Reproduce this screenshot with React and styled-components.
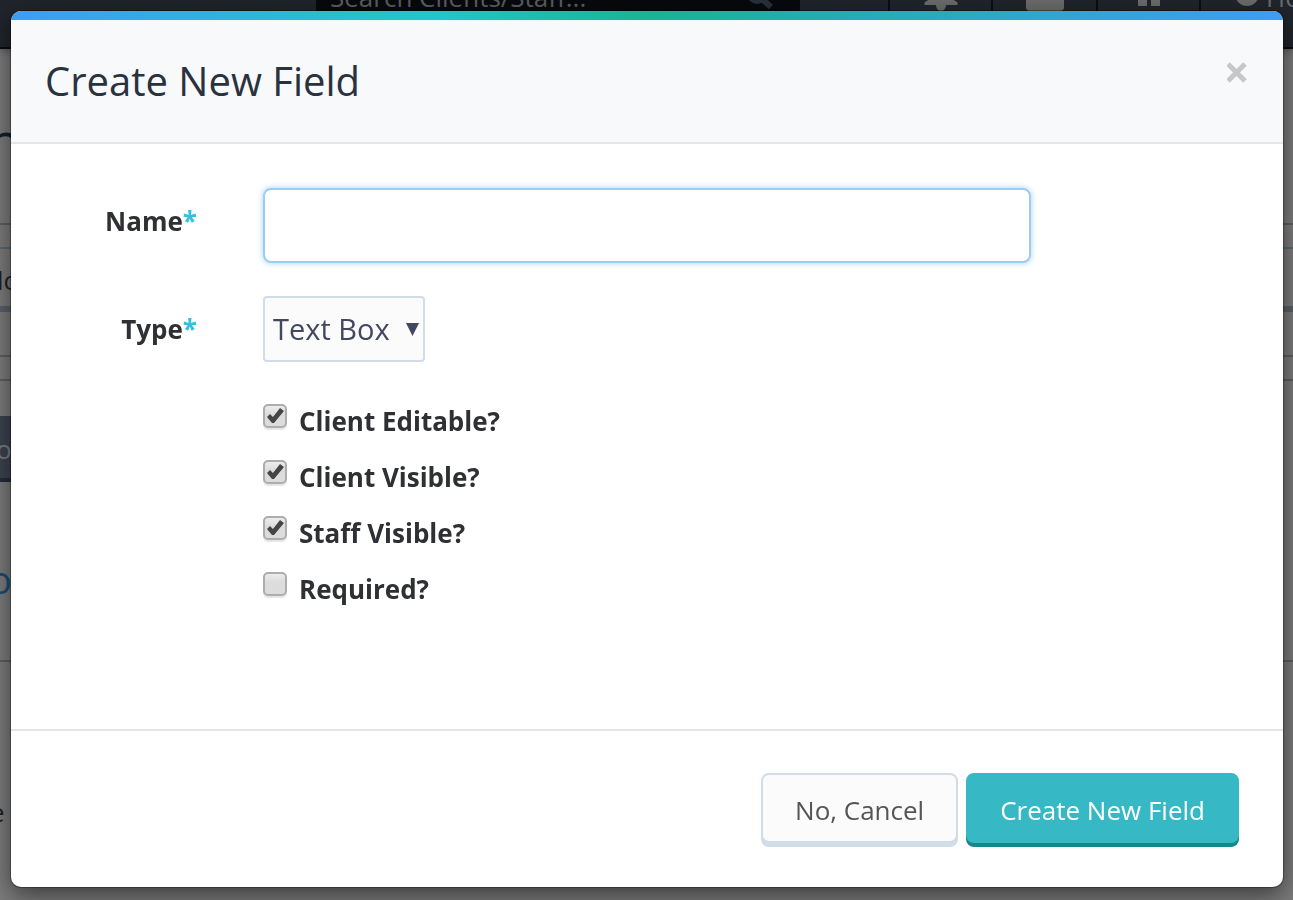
import React, { useState } from "react";
import styled, { createGlobalStyle } from "styled-components";

const GlobalStyle = createGlobalStyle`
  * {
    box-sizing: border-box;
  }
  body {
    margin: 0;
    background: #7c7c7c;
    color: #333;
    font-family: "Open Sans", "Noto Sans", sans-serif;
  }
`;

const Screen = styled.div`
  height: 100vh;
  overflow: hidden;
`;

/* page behind the dialog */
const NavBar = styled.nav`
  display: grid;
  grid-template-columns:
    minmax(0, 316fr) minmax(0, 484fr) minmax(0, 90fr) minmax(0, 103fr)
    minmax(0, 105fr) minmax(0, 103fr) minmax(0, 92fr);
  align-items: end;
  align-content: end;
  height: 49px;
  overflow: hidden;
  background: #20242c;
  border-bottom: 2px solid #0b0c0e;
  box-shadow: 0 2px 8px rgba(0, 0, 0, 0.3);
`;

const SearchBox = styled.div`
  height: 100px;
  display: flex;
  align-items: center;
  justify-content: space-between;
  padding: 0 26px 0 14px;
  background: #08090c;
  color: #5b5e62;
  font-size: 26px;
`;

const NavItem = styled.div`
  height: 100px;
  display: flex;
  align-items: center;
  justify-content: ${({ $start }) => ($start ? "flex-start" : "center")};
  gap: 6px;
  padding-left: ${({ $start }) => ($start ? 33 : 0)}px;
  border-right: ${({ $start }) => ($start ? "0" : "2px solid #0b0c0e")};
  color: #6b6b6b;
  font-size: 26px;
  white-space: nowrap;

  svg {
    flex-shrink: 0;
  }
`;

const Backdrop = styled.main`
  display: flex;
  flex-direction: column;
`;

const Strip = styled.div`
  height: ${({ $height }) => $height}px;
  overflow: hidden;
  border-bottom: ${({ $line, $thick }) =>
    $line ? `${$thick || 2}px solid ${$line}` : "0"};
  color: ${({ $color }) => $color || "#222"};
  font-size: ${({ $size }) => $size || 26}px;
  line-height: ${({ $lead, $height }) => $lead || $height}px;
  text-indent: ${({ $indent }) => $indent || 0}px;
`;

const PageButton = styled.div`
  width: 120px;
  height: 66px;
  background: #3c4452;
  border-bottom: 4px solid #252c36;
  color: #7f7f7f;
  font-size: 26px;
  line-height: 66px;
  text-indent: -4px;
`;

/* dialog */
const Overlay = styled.div`
  position: fixed;
  inset: 0;
  padding: 11px 10px 13px 11px;
`;

const Dialog = styled.section`
  height: 100%;
  display: flex;
  flex-direction: column;
  overflow: hidden;
  background: #fff;
  border-radius: 10px;
  box-shadow: 0 0 0 1px rgba(0, 0, 0, 0.3), 0 8px 26px rgba(0, 0, 0, 0.55);
`;

const TopStripe = styled.div`
  flex-shrink: 0;
  height: 9px;
  background: linear-gradient(
    to right,
    #3d9df6 0%,
    #24c6c8 33%,
    #1ab394 50%,
    #3d9df6 100%
  );
`;

const Header = styled.header`
  display: flex;
  justify-content: space-between;
  align-items: flex-start;
  padding: 34px;
  background: #f8f9fb;
  border-bottom: 2px solid #e4e5e7;
`;

const Title = styled.h1`
  margin: 0;
  color: #2a323e;
  font-size: 40px;
  font-weight: 400;
  line-height: 54px;
`;

const CloseButton = styled.button`
  display: flex;
  margin: 8px 2px 0 0;
  padding: 0;
  border: 0;
  background: none;
  color: #c6c7c9;
  cursor: pointer;
`;

const Form = styled.form`
  flex: 1;
  display: flex;
  flex-direction: column;
`;

const Fields = styled.div`
  flex: 1;
  display: grid;
  grid-template-columns: 186px minmax(0, 768px);
  align-content: start;
  column-gap: 66px;
  row-gap: 33px;
  padding: 44px 0;
`;

const FieldLabel = styled.label`
  padding-top: 15px;
  color: #2f3033;
  font-size: 26px;
  font-weight: 700;
  line-height: 36px;
  text-align: right;
`;

const Star = styled.span`
  color: #2fc1dd;
`;

const NameInput = styled.input`
  width: 100%;
  height: 75px;
  padding: 0 16px;
  border: 2px solid #9fcdf2;
  border-radius: 8px;
  outline: 0;
  box-shadow: 0 0 6px #9fd2fa;
  color: #333;
  font: inherit;
  font-size: 28px;
`;

const SelectWrap = styled.div`
  display: grid;
  justify-self: start;
  align-items: center;
  width: 162px;

  select,
  svg {
    grid-area: 1 / 1;
  }
  svg {
    justify-self: end;
    margin-right: 6px;
    pointer-events: none;
  }
`;

const Select = styled.select`
  appearance: none;
  width: 100%;
  height: 66px;
  padding: 0 8px 2px;
  border: 2px solid #d0dce8;
  border-radius: 4px;
  background: #fbfbfc;
  color: #434860;
  font: inherit;
  font-size: 29px;
`;

const CheckList = styled.div`
  grid-column: 2;
  display: flex;
  flex-direction: column;
  gap: 20px;
  padding-top: 8px;
`;

const CheckRow = styled.label`
  display: flex;
  gap: 12px;
  color: #2f3033;
  font-size: 26px;
  font-weight: 700;
  line-height: 36px;
`;

const CheckWrap = styled.span`
  display: grid;
  place-items: center;
  width: 24px;
  height: 24px;
  margin-top: 1px;

  input,
  svg {
    grid-area: 1 / 1;
  }
  svg {
    pointer-events: none;
  }
`;

const CheckInput = styled.input`
  appearance: none;
  width: 24px;
  height: 24px;
  margin: 0;
  border: 2px solid #adadad;
  border-radius: 5px;
  background: linear-gradient(#ececec, #dcdcdc 40%);
  box-shadow: 0 2px 1px rgba(0, 0, 0, 0.1);
`;

const Footer = styled.footer`
  display: flex;
  justify-content: flex-end;
  gap: 8px;
  padding: 42px 44px 44px;
  border-top: 2px solid #e4e5e7;
`;

const Button = styled.button`
  height: 70px;
  padding: 3px 32px 0;
  border: 2px solid ${({ $primary }) => ($primary ? "#36b9c4" : "#d0dce8")};
  border-radius: 8px;
  background: ${({ $primary }) => ($primary ? "#36b9c4" : "#fbfbfc")};
  box-shadow: 0 4px 0 ${({ $primary }) => ($primary ? "#19868d" : "#d0dce8")};
  color: ${({ $primary }) => ($primary ? "#fff" : "#555")};
  font: inherit;
  font-size: 26px;
  cursor: pointer;
`;

const SearchIcon = () => (
  <svg width="28" height="28" viewBox="0 0 28 28" fill="none" stroke="#28313b">
    <circle cx="11" cy="11" r="8" strokeWidth="4" />
    <path d="M17 17l8 7" strokeWidth="6" />
  </svg>
);

const BellIcon = () => (
  <svg width="34" height="28" viewBox="0 0 34 28" fill="currentColor">
    <path d="M17 0C9 0 8 5 8 10c0 4-3 7-7 9-1 2-1 3 1 3h10c0 3 2 6 5 6s5-3 5-6h10c2 0 2-1 1-3-4-2-7-5-7-9 0-5-1-10-9-10z" />
  </svg>
);

const MailIcon = () => (
  <svg width="38" height="28" viewBox="0 0 38 28" fill="currentColor">
    <path d="M0 4q0-4 4-4h30q4 0 4 4L19 14zM0 6l16 10q3 2 6 0L38 6v18q0 4-4 4H4q-4 0-4-4z" />
  </svg>
);

const PauseIcon = () => (
  <svg width="22" height="18" viewBox="0 0 22 18" fill="currentColor">
    <path d="M0 0h9v18H0zM13 0h9v18h-9z" />
  </svg>
);

const HelpIcon = () => (
  <svg width="26" height="30" viewBox="0 0 26 30">
    <circle cx="13" cy="12" r="12" fill="currentColor" />
    <path d="M10 9h5v9h-5zM11 3h4v4h-4z" fill="#20242c" />
  </svg>
);

const CloseIcon = () => (
  <svg width="20" height="22" viewBox="0 0 20 22" stroke="currentColor">
    <path d="M1 2l17 17M18 2L1 19" strokeWidth="5" />
  </svg>
);

const ArrowIcon = () => (
  <svg width="13" height="13" viewBox="0 0 13 13" fill="#434860">
    <path d="M0 0h13L6.500 13z" />
  </svg>
);

const TickIcon = () => (
  <svg width="20" height="20" viewBox="0 0 20 20" fill="#444">
    <path d="M2 11l3-3 3 3 7-9 4 3L9 17H7z" />
  </svg>
);

const CHECKS = [
  { id: "clientEditable", label: "Client Editable?", checked: true },
  { id: "clientVisible", label: "Client Visible?", checked: true },
  { id: "staffVisible", label: "Staff Visible?", checked: true },
  { id: "required", label: "Required?", checked: false },
];

const CheckField = ({ id, label, initial }) => {
  const [checked, setChecked] = useState(initial);
  return (
    <CheckRow htmlFor={id}>
      <CheckWrap>
        <CheckInput
          id={id}
          type="checkbox"
          checked={checked}
          onChange={(e) => setChecked(e.target.checked)}
        />
        {checked && <TickIcon />}
      </CheckWrap>
      {label}
    </CheckRow>
  );
};

const App = () => {
  return (
    <>
      <GlobalStyle />
      <Screen>
        <NavBar>
          <div />
          <SearchBox>
            Search Clients/Staff...
            <SearchIcon />
          </SearchBox>
          <NavItem />
          <NavItem>
            <BellIcon />
          </NavItem>
          <NavItem>
            <MailIcon />
          </NavItem>
          <NavItem>
            <PauseIcon />
          </NavItem>
          <NavItem $start>
            <HelpIcon />
            Ho
          </NavItem>
        </NavBar>
        <Backdrop>
          <Strip
            $height={176}
            $lead={184}
            $line="#5f5f5f"
            $size={54}
            $indent={-12}
            $color="#14202c"
          >
            n
          </Strip>
          <Strip $height={24} $line="#5f6870" />
          <Strip
            $height={63}
            $lead={62}
            $line="#59616a"
            $thick={6}
            $indent={-3}
          >
            lo
          </Strip>
          <Strip $height={45} $line="#5f5f5f" />
          <Strip $height={24} $line="#5f5f5f" />
          <Strip $height={35} />
          <PageButton>o</PageButton>
          <Strip
            $height={180}
            $lead={194}
            $line="#5f5f5f"
            $color="#1a4d77"
            $size={38}
            $indent={-11}
          >
            o
          </Strip>
          <Strip $height={300} $indent={-10}>
            e
          </Strip>
        </Backdrop>
      </Screen>
      <Overlay>
        <Dialog role="dialog" aria-modal="true" aria-labelledby="dialogTitle">
          <TopStripe />
          <Header>
            <Title id="dialogTitle">Create New Field</Title>
            <CloseButton type="button" aria-label="Close">
              <CloseIcon />
            </CloseButton>
          </Header>
          <Form onSubmit={(e) => e.preventDefault()}>
            <Fields>
              <FieldLabel htmlFor="fieldName">
                Name<Star>*</Star>
              </FieldLabel>
              <NameInput id="fieldName" type="text" />
              <FieldLabel htmlFor="fieldType">
                Type<Star>*</Star>
              </FieldLabel>
              <SelectWrap>
                <Select id="fieldType">
                  <option>Text Box</option>
                </Select>
                <ArrowIcon />
              </SelectWrap>
              <CheckList>
                {CHECKS.map((c) => (
                  <CheckField
                    key={c.id}
                    id={c.id}
                    label={c.label}
                    initial={c.checked}
                  />
                ))}
              </CheckList>
            </Fields>
            <Footer>
              <Button type="button">No, Cancel</Button>
              <Button type="submit" $primary>
                Create New Field
              </Button>
            </Footer>
          </Form>
        </Dialog>
      </Overlay>
    </>
  );
};

export default App;
